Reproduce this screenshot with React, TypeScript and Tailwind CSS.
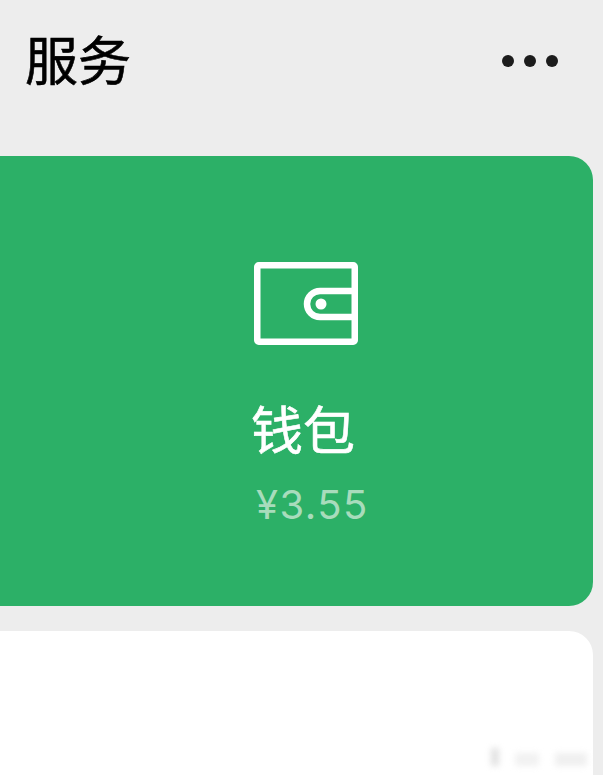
export default function App() {
  return (
    <div className="relative h-[775px] w-[603px] overflow-hidden bg-[#ededed] font-['Noto_Sans_CJK_SC','Noto_Sans',sans-serif]">
      {/* header */}
      <div className="flex h-[156px] items-start justify-between pl-[25px] pr-[45px]">
        <h1 className="mt-[21px] text-[53px] leading-[75px] font-normal text-black [-webkit-text-stroke:0.6px_black]">服务</h1>
        <div className="mt-[55px] flex gap-[10px]">
          <span className="h-[12px] w-[12px] rounded-full bg-[#1c1c1c]" />
          <span className="h-[12px] w-[12px] rounded-full bg-[#1c1c1c]" />
          <span className="h-[12px] w-[12px] rounded-full bg-[#1c1c1c]" />
        </div>
      </div>

      {/* wallet card */}
      <div className="mr-[10px] flex h-[450px] flex-col items-center rounded-r-[24px] bg-[#2cb067] pl-[19px] pt-[106px]">
        <svg width="104" height="83" viewBox="0 0 104 83" fill="none" stroke="#ffffff" strokeWidth="6.5">
          <rect x="3.25" y="3.25" width="97.5" height="76.5" rx="1.5" strokeLinejoin="round" />
          <path d="M101 29H66a13 13 0 0 0 0 26H101" />
          <circle cx="67" cy="42" r="5.5" fill="#ffffff" stroke="none" />
        </svg>
        <div className="mr-[6px] mt-[45px] text-[52px] leading-[75px] font-normal text-white [-webkit-text-stroke:0.6px_white]">钱包</div>
        <div className="ml-[13px] mt-[15px] font-['Inter',sans-serif] text-[40px] leading-[50px] tracking-[1.5px] text-[#a8dcbc]">¥3.55</div>
      </div>

      {/* next card */}
      <div className="mr-[10px] mt-[25px] h-[200px] rounded-r-[24px] bg-white" />

      {/* blurred watermark */}
      <div className="absolute left-[491px] top-[748px] flex items-end gap-[16px] opacity-50 blur-[3px]">
        <span className="h-[18px] w-[8px] bg-[#c4c4c4]" />
        <span className="h-[13px] w-[24px] bg-[#e4e4e4]" />
        <span className="h-[13px] w-[32px] bg-[#e0e0e0]" />
      </div>
    </div>
  )
}
